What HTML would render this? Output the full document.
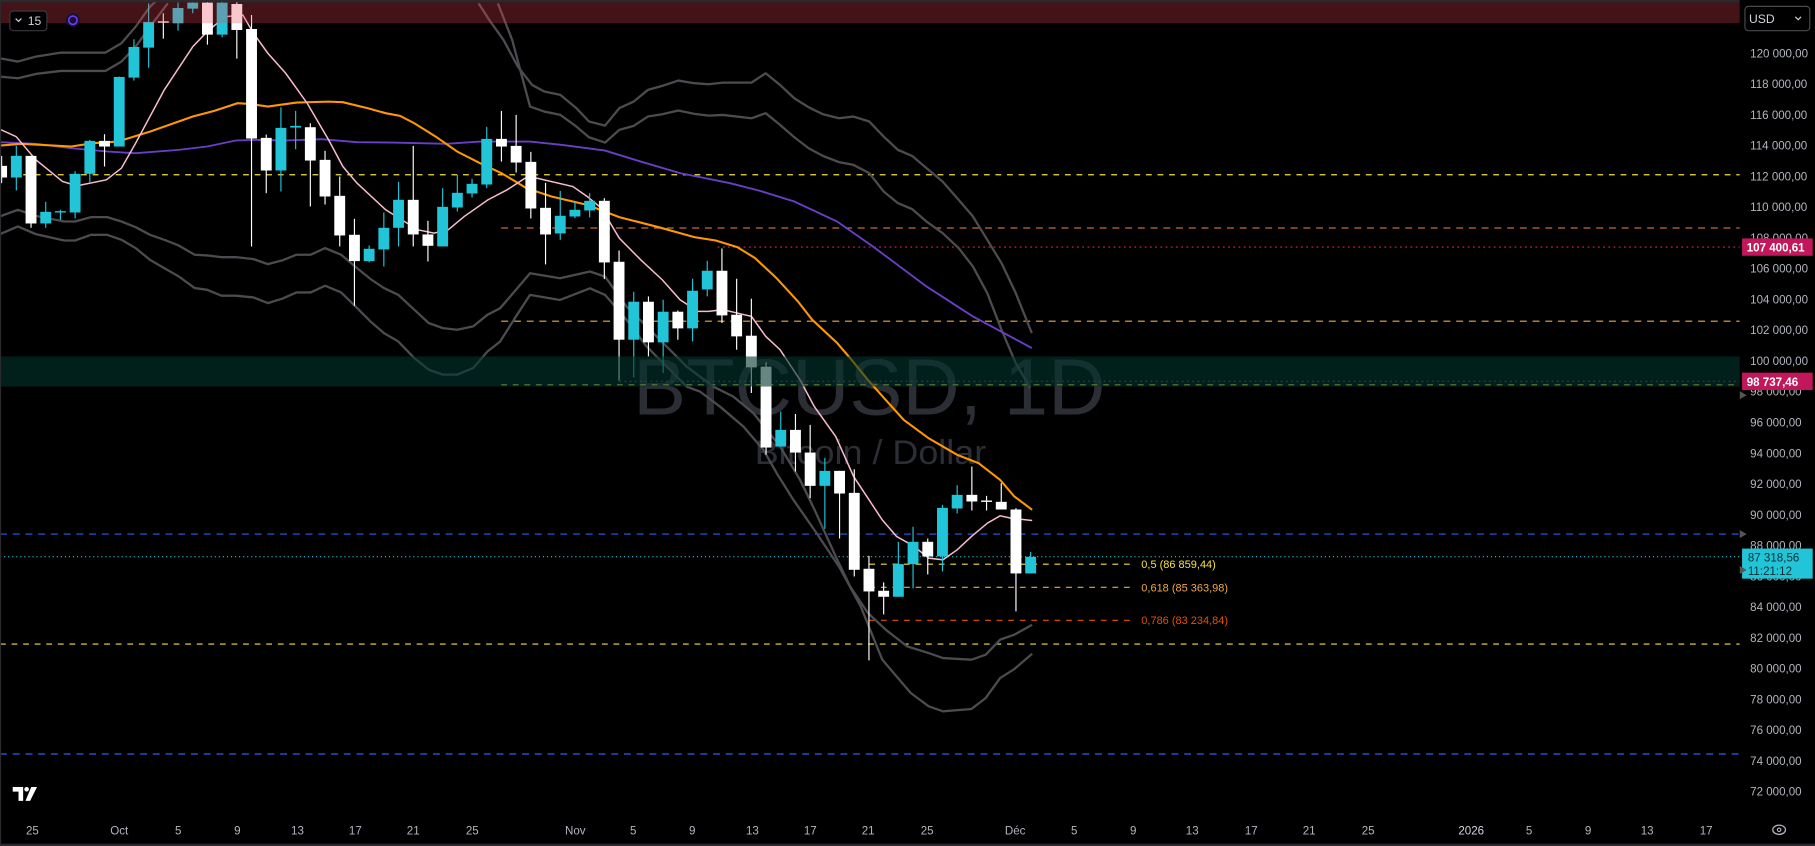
<!DOCTYPE html>
<html><head><meta charset="utf-8"><style>
html,body{margin:0;padding:0;background:#000;overflow:hidden}
svg{display:block}
text{font-family:"Liberation Sans",sans-serif}
</style></head><body>
<svg id="c" width="1815" height="846" viewBox="0 0 1568 731" preserveAspectRatio="none" xmlns="http://www.w3.org/2000/svg">
<rect x="0" y="0" width="1568" height="731" fill="#000"/>
<!-- watermark -->
<text x="751" y="358" font-size="69" fill="#2b2e34" text-anchor="middle" textLength="408" lengthAdjust="spacingAndGlyphs">BTCUSD, 1D</text>
<text x="752" y="401" font-size="30" fill="#2b2e34" text-anchor="middle" textLength="200" lengthAdjust="spacingAndGlyphs">Bitcoin / Dollar</text>

<!-- horizontal lines -->
<g fill="none" stroke-width="1">
<line x1="0" y1="151" x2="1503" y2="151" stroke="#f5e142" stroke-dasharray="5,5"/>
<line x1="433" y1="197" x2="1503" y2="197" stroke="#c46a3c" stroke-dasharray="6,5"/>
<line x1="620" y1="213.5" x2="1503" y2="213.5" stroke="#e91e63" stroke-dasharray="1.5,3"/>
<line x1="433" y1="277.5" x2="1503" y2="277.5" stroke="#f0a848" stroke-dasharray="6,5"/>
<line x1="535" y1="329.5" x2="1503" y2="329.5" stroke="#e91e63" stroke-dasharray="1.5,3"/>
<line x1="433" y1="332.5" x2="1503" y2="332.5" stroke="#f5e142" stroke-dasharray="5,5"/>
<line x1="0" y1="461.5" x2="1503" y2="461.5" stroke="#2f5cf0" stroke-dasharray="6,5"/>
<line x1="0" y1="481" x2="1503" y2="481" stroke="#22c5d8" stroke-dasharray="1,2.5"/>
<line x1="751" y1="487.5" x2="978" y2="487.5" stroke="#f5e142" stroke-dasharray="5,5"/>
<line x1="751" y1="507.5" x2="978" y2="507.5" stroke="#f0a848" stroke-dasharray="5,5"/>
<line x1="751" y1="536" x2="978" y2="536" stroke="#e65100" stroke-dasharray="5,5"/>
<line x1="0" y1="556.5" x2="1503" y2="556.5" stroke="#f5e142" stroke-dasharray="5,5"/>
<line x1="0" y1="651.5" x2="1503" y2="651.5" stroke="#2f5cf0" stroke-dasharray="6,5"/>
</g>
<g font-size="9.5">
<text x="986" y="491" fill="#f5e142">0,5 (86 859,44)</text>
<text x="986" y="511" fill="#f0a848">0,618 (85 363,98)</text>
<text x="986" y="539" fill="#e65100">0,786 (83 234,84)</text>
</g>

<!-- Bollinger -->
<g fill="none" stroke="#4b4b50" stroke-width="2" stroke-linejoin="round">
<polyline points="0,50.4 15.4,53.2 30.9,48.9 52.5,45.5 91,45.5 104.9,37.4 117.2,23 129.6,5.8 135.8,0"/>
<polyline points="0,66.2 15.4,67.6 30.9,63.9 52.5,61.3 91,61.3 104.9,53.2 117.2,40.3 129.6,23 145,2.9"/>
<polyline points="413.5,2.9 422.7,17.3 435,34.5 447.4,57.6 459.7,73.4 470.2,79.1 484.1,82 498,93.5 508.8,105 522.7,108.5 535,93.5 547.4,87.8 559.7,77.7 572.1,74.2 586,69.6 599.8,71.9 612.2,72.8 624.5,71.4 649.2,71.4 661.5,63.3 673.9,73.4 686.2,84.9 698.6,92.7 710.9,98.7 724.8,102.2 737.1,100.7 751,105 763.4,118 775.7,129.5 788,134.7 800.4,145.3 814.3,156.8 828.2,172.7 840.5,187 852.9,207.2 865.2,227.3 877.5,253.2 891.4,287.8"/>
<polyline points="430.1,2.9 442.5,34.5 457.9,92.1 470.2,96.4 484.1,99.3 498,109.4 508.8,118.6 522.7,123.2 535,112.2 547.4,108.8 559.7,100.7 572.1,98.7 586,95.5 599.8,98.4 612.2,99.9 624.5,99.3 649.2,102.2 661.5,97.8 673.9,107.9 686.2,118.6 698.6,128.1 710.9,134.7 724.8,140.1 737.1,142.4 751,149.6 763.4,165.5 775.7,175.5 788,180.7 800.4,191.4 814.3,201.4 828.2,214.4 840.5,230.2 852.9,253.2 865.2,284.9 877.5,313.7 889.9,335"/>
<polyline points="0,187 15.4,181.3 30.9,186.5 55.5,191.4 64.8,191.4 78.7,187.6 92.6,187.6 104.9,191.4 117.2,196.3 129.6,202.9 141.9,207.2 154.3,212.1 168.2,220.1 179,220.7 191.3,222.2 203.6,222.2 219.1,223.9 231.4,228.2 243.8,225 256.1,220.1 268.4,220.1 280.8,214.4 294.7,220.1 308.5,231.7 320.9,241.7 331.7,248.9 344,254.7 357.9,267.6 370.3,279.1 382.6,283.5 394.9,284.9 408.8,282 421.2,271.9 432,266.4 445.8,250.4 457.9,236.1 483.8,240.4 509.7,234.6 522.7,239 541.4,265 561.6,285.1 576,299.5 593.3,316.8 616.3,334.1 633.6,342.7 650.9,357.1 662.5,371.5 674,385.9 691.2,414.7 703.5,440 722,480.8 734.4,506.7 749.8,529.7 765.2,544.1 783.7,558.5 802.3,564.3 814.6,568.6 839.3,570 851.6,565.7 864,552.7 876.3,548.4 891.7,539.8"/>
<polyline points="0,202.3 15.4,195.7 30.9,202.3 55.5,207.8 64.8,207.8 78.7,202.9 92.6,202.9 104.9,207.2 117.2,214.4 129.6,224.5 141.9,231.7 154.3,238.8 168.2,248.9 179,250.4 191.3,255.5 203.6,255.5 219.1,257 231.4,261.9 243.8,258.1 256.1,252.7 268.4,252.7 280.8,246.9 294.7,252.7 308.5,266.2 320.9,278.6 331.7,287.8 344,295 357.9,309.4 370.3,319.4 382.6,323.7 394.9,323.7 408.8,318 421.2,303.6 432,295.2 445.8,273.4 457.9,254.8 483.8,259.2 509.7,249.1 522.7,254.8 541.4,276.5 558.7,299.5 576,316.8 593.3,334.1 604.8,338.4 622.1,351.4 642.3,368.6 659.6,388.8 671.1,409 685.5,432 705,460 725.1,490 743.6,524 762.2,570 786.8,598.8 802.3,610.3 814.6,614.6 839.3,612.6 851.6,603.1 864,585.9 876.3,578.1 891.7,564.9"/>
</g>
<!-- purple -->
<polyline fill="none" stroke="#6a3fc8" stroke-width="1.6" points="0,122.9 30.9,124.3 61.7,128.1 92.6,130.9 117.2,132.4 154.3,129.5 179,126.6 203.6,121.4 222.2,120.9 246.8,121.4 277.7,120.3 308.5,122.9 339.4,123.2 385.7,124.3 414.7,122.3 457.9,122.3 485.7,125.2 522.7,130.1 553.5,139.6 587.5,149.6 630.7,158.3 655.4,164.6 686.2,174.1 723.2,191.4 754.1,213 800.4,247.5 840.5,273.4 891.4,300.7"/>
<!-- orange -->
<polyline fill="none" stroke="#ff9800" stroke-width="1.8" points="0,125.8 18.5,124.3 61.7,126.6 80.2,123.7 101.8,122.3 129.6,113.7 166.6,100.7 185.1,95.8 205.2,89.2 216,89.8 231.4,92.1 256.1,88.6 283.9,87.8 296.2,88.3 317.8,93.5 333.2,97.8 345.6,100.1 357.9,106.5 376.4,118 394.9,130.9 414.7,141 433.2,149.6 454.8,162.6 476.4,169.8 507.3,177 535,187.6 569,196.3 599.8,204.9 618.3,207.8 636.9,213.5 652.3,223 670.8,240.3 689.3,260.4 701.7,276.3 723.2,296.4 735.6,310.8 749.8,328.3 765.2,345.6 780.7,362.8 802.3,378.7 826.9,393 845.4,400.2 864,414.6 876.3,429 891.7,440.5"/>
<!-- pink -->
<polyline fill="none" stroke="#f8bbd0" stroke-width="1.3" points="0,111.7 13.9,118 30.9,138 54,156.8 66.3,160.6 91.9,155.4 104.9,145.3 117.2,123.7 141.9,77.7 166.6,40.3 179,27.3 194.4,14.4 209.8,13 219,28.8 231.4,46 246.8,63.3 265.4,89.2 283.9,120.9 296.2,143.9 308.5,158.3 333.2,181.3 361,198.6 374.9,201.4 387.2,198.6 401.1,187 421.5,172.7 438.1,164 453.5,154 464.1,154 494.9,161.2 507.3,169.8 519.6,179.9 535,205.8 553.5,224.5 572.1,241.7 587.5,259 602.9,269 612.2,269 624.5,267.6 636.9,270.5 649.2,273.4 661.5,290.6 673.9,302.2 691.2,328.3 703.5,351.3 722,377.2 737.5,411.8 762.2,449.2 774.5,463.5 789.9,472.2 802.3,482.3 814.6,483.7 826.9,475.1 839.3,463.5 853.1,452 864,445.7 873.2,447.7 891.7,449.7"/>

<g id="candles"></g>

<!-- zones -->
<rect x="0" y="0" width="1503" height="20" fill="rgb(231,66,80)" fill-opacity="0.29"/>
<rect x="0" y="308" width="1503" height="26" fill="rgb(3,53,45)" fill-opacity="0.6"/>
<rect x="0" y="0" width="1568" height="2" fill="#2a2a2e"/>

<!-- top-left controls -->
<rect x="8.5" y="9.5" width="32" height="17" rx="3" fill="#000" stroke="#3a3a3e"/>
<path d="M13.5 16 l2.5 2.5 l2.5 -2.5" fill="none" stroke="#d1d4dc" stroke-width="1.1"/>
<text x="24" y="21.5" font-size="10.5" fill="#d1d4dc">15</text>
<circle cx="63" cy="17.5" r="6" fill="#1b0f3a"/>
<circle cx="63" cy="17.5" r="3.6" fill="none" stroke="#6b3ff0" stroke-width="1.4"/>

<!-- price axis -->
<rect x="1503" y="0" width="65" height="731" fill="#000"/>
<rect x="1507.5" y="5.5" width="56" height="21" rx="3" fill="#000" stroke="#4a4a4e"/>
<text x="1511" y="20" font-size="10.5" fill="#d1d4dc">USD</text>
<path d="M1551 14.5 l2.5 2.5 l2.5 -2.5" fill="none" stroke="#d1d4dc" stroke-width="1"/>
<g font-size="10" fill="#b2b5be">
<text x="1512" y="49.5">120 000,00</text>
<text x="1512" y="76">118 000,00</text>
<text x="1512" y="102.7">116 000,00</text>
<text x="1512" y="129.2">114 000,00</text>
<text x="1512" y="155.8">112 000,00</text>
<text x="1512" y="182.4">110 000,00</text>
<text x="1512" y="209">108 000,00</text>
<text x="1512" y="235.6">106 000,00</text>
<text x="1512" y="262.2">104 000,00</text>
<text x="1512" y="288.7">102 000,00</text>
<text x="1512" y="315.3">100 000,00</text>
<text x="1512" y="341.9">98 000,00</text>
<text x="1512" y="368.5">96 000,00</text>
<text x="1512" y="395.1">94 000,00</text>
<text x="1512" y="421.7">92 000,00</text>
<text x="1512" y="448.3">90 000,00</text>
<text x="1512" y="474.8">88 000,00</text>
<text x="1512" y="501.4">86 000,00</text>
<text x="1512" y="528">84 000,00</text>
<text x="1512" y="554.6">82 000,00</text>
<text x="1512" y="581.2">80 000,00</text>
<text x="1512" y="607.8">78 000,00</text>
<text x="1512" y="634.4">76 000,00</text>
<text x="1512" y="661">74 000,00</text>
<text x="1512" y="687.5">72 000,00</text>
</g>
<rect x="1505" y="206" width="61" height="15" fill="#c2185b"/>
<text x="1509" y="217.5" font-size="10" fill="#fff" font-weight="bold">107 400,61</text>
<rect x="1505" y="322" width="61" height="15" fill="#c2185b"/>
<text x="1509" y="333.5" font-size="10" fill="#fff" font-weight="bold">98 737,46</text>
<rect x="1505" y="474" width="61" height="26" fill="#22c5d8"/>
<text x="1510" y="485" font-size="10" fill="#0b2d33">87 318,56</text>
<text x="1510" y="497" font-size="10" fill="#0b2d33">11:21:12</text>
<path d="M1503 338 l6 3.5 l-6 3.5z M1503 458 l6 3.5 l-6 3.5z M1503 489 l6 3.5 l-6 3.5z" fill="#555"/>

<!-- time axis -->
<g font-size="10" fill="#b2b5be" text-anchor="middle">
<text x="28" y="721">25</text><text x="103" y="721">Oct</text><text x="154" y="721">5</text><text x="205" y="721">9</text><text x="257" y="721">13</text><text x="307" y="721">17</text><text x="357" y="721">21</text><text x="408" y="721">25</text>
<text x="497" y="721">Nov</text><text x="547" y="721">5</text><text x="598" y="721">9</text><text x="650" y="721">13</text><text x="700" y="721">17</text><text x="750" y="721">21</text><text x="801" y="721">25</text>
<text x="877" y="721">Déc</text><text x="928" y="721">5</text><text x="979" y="721">9</text><text x="1030" y="721">13</text><text x="1081" y="721">17</text><text x="1131" y="721">21</text><text x="1182" y="721">25</text>
<text x="1271" y="721" fill="#d1d4dc">2026</text><text x="1321" y="721">5</text><text x="1372" y="721">9</text><text x="1423" y="721">13</text><text x="1474" y="721">17</text>
</g>
<ellipse cx="1537" cy="717" rx="5.5" ry="4" fill="none" stroke="#b2b5be" stroke-width="1.1"/>
<circle cx="1537" cy="717" r="1.5" fill="none" stroke="#b2b5be" stroke-width="1"/>
<!-- TV logo -->
<path d="M11 680 h9 v12 h-4 v-8 h-5z" fill="#fff"/>
<circle cx="23" cy="682" r="2" fill="#fff"/>
<path d="M27 680 h5 l-6 12 h-4z" fill="#fff"/>
<rect x="0" y="729" width="1568" height="2" fill="#2a2a2e"/>
<rect x="0" y="0" width="1" height="731" fill="#2a2a2e"/>
</svg>
<script>
var A=[
[-8,'W',498,533,468,550],[-7,'C',468,533,438,572],[-6,'W',468,671,468,684],[-5,'C',636,671,606,684],[-4,'C',634,638,630,660],[-3,'C',522,638,514,656],[-2,'C',423,522,420,550],[-1,'W',423,440,403,500],[0,'C',231,440,230,440],[1,'C',141,233,118,242],[2,'C',66,143,10,203],[3,'W',64,68,40,116],[4,'C',24,70,8,92],[5,'C',8,26,0,40],[6,'W',8,104,0,134],[7,'C',8,104,0,112],[8,'W',12,90,0,176],[9,'W',87,416,45,740],[10,'W',414,512,404,580],[11,'C',384,512,322,575],[12,'C',378,383,333,448],[13,'W',382,482,370,620],[14,'W',480,590,453,614],[15,'W',588,707,530,740],[16,'W',705,784,657,918],[17,'C',747,784,737,788],[18,'C',684,749,638,800],[19,'C',600,684,546,740],[20,'W',600,704,438,740],[21,'W',704,738,663,785],[22,'C',621,740,565,740],[23,'C',579,623,525,635],[24,'C',552,581,537,593],[25,'C',417,554,381,565],[26,'W',417,440,333,485],[27,'W',438,488,345,518],[28,'W',486,626,456,656],[29,'W',624,704,549,794],
[30,'C',648,701,573,720],[31,'C',630,650,605,655],[32,'C',603,632,580,653],[33,'W',603,788,595,838],[34,'W',786,1020,752,1143],[35,'C',906,1020,876,1133],[36,'W',906,1028,890,1070],[37,'C',936,1028,900,1120],[38,'W',936,986,932,1020],[39,'C',873,986,837,1025],[40,'C',813,869,783,890],[41,'W',813,947,746,970],[42,'W',945,1010,837,1050],[43,'W',1008,1103,897,1180]];
var B=[[45,'C',150,200,95,200],[46,'W',150,218,102,275],[47,'W',218,318,135,355],[48,'C',273,318,234,447],[49,'W',273,341,273,476],[50,'W',339,570,268,590],[51,'W',567,635,528,842],[52,'W',633,651,608,704],[53,'C',553,651,486,651],[54,'C',486,553,441,626],[55,'W',486,530,476,584],[56,'C',384,530,375,575],[57,'C',345,386,316,401],[58,'W',345,365,260,392],[59,'W',362,366,348,392],[60,'W',366,389,310,389],[61,'W',389,581,385,695],[62,'C',531,581,516,581]];
var c=[];
A.forEach(function(a){c.push([a[0],a[1],a[2]/3.475,a[3]/3.475,a[4]/3.475,a[5]/3.475]);});
c.push([44,'W',316.8,386.7,313,392.8]);
B.forEach(function(a){c.push([a[0],a[1],328.3+a[2]/3.475,328.3+a[3]/3.475,328.3+a[4]/3.475,328.3+a[5]/3.475]);});
var s='';
c.forEach(function(d){var x=103+12.7*d[0];var col=d[1]=='C'?'#22c5d8':'#ffffff';
var bt=d[2],bb=Math.max(d[3],d[2]+1.2);
s+='<line x1="'+x+'" y1="'+d[4]+'" x2="'+x+'" y2="'+Math.max(d[5],bb)+'" stroke="'+col+'" stroke-width="1"/>';
s+='<rect x="'+(x-4.7)+'" y="'+bt+'" width="9.4" height="'+(bb-bt)+'" fill="'+col+'"/>';});
document.getElementById('candles').innerHTML=s;
</script>
</body></html>
